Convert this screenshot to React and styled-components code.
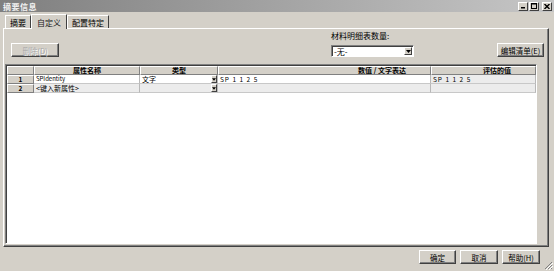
import React from 'react';
import styled, { createGlobalStyle } from 'styled-components';

const GlobalStyle = createGlobalStyle`
  html, body {
    margin: 0;
    padding: 0;
    background: #d4d0c8;
  }
  * { box-sizing: border-box; }
`;

const FONT = `"Noto Sans CJK SC", "DejaVu Sans", sans-serif`;

const Window = styled.div`
  width: 554px;
  height: 271px;
  background: #d4d0c8;
  display: flex;
  flex-direction: column;
  font-family: ${FONT};
  font-size: 8px;
  color: #000;
  overflow: hidden;
  position: relative;
`;

const TitleBar = styled.div`
  height: 13px;
  display: flex;
  align-items: center;
  justify-content: space-between;
  padding: 0 2px 0 3px;
  background: linear-gradient(to right, #7f7f7f 0%, #9c9c9c 40%, #c6c6c6 100%);
`;

const TitleText = styled.span`
  color: #f2f2f2;
  font-size: 8px;
  font-weight: bold;
  letter-spacing: 0.5px;
`;

const TitleButtons = styled.div`
  display: flex;
  gap: 1px;
`;

const TitleButton = styled.div`
  width: 10px;
  height: 9px;
  background: #d4d0c8;
  border: 1px solid;
  border-color: #fff #404040 #404040 #fff;
  display: flex;
  align-items: center;
  justify-content: center;
  margin-left: ${p => (p.$gap ? '2px' : '0')};
`;

const Body = styled.div`
  flex: 1;
  display: flex;
  flex-direction: column;
  padding: 1px 5px 0 3px;
`;

const TabRow = styled.div`
  display: flex;
  height: 15px;
  align-items: flex-end;
  padding-left: 2px;
`;

const Tab = styled.div`
  height: ${p => (p.$active ? '15px' : '13px')};
  padding: 0 ${p => (p.$active ? '5px' : '4px')};
  display: flex;
  align-items: center;
  background: #d4d0c8;
  border-top: 1px solid #fff;
  border-left: 1px solid #fff;
  border-right: 1px solid #404040;
  margin-bottom: ${p => (p.$active ? '-1px' : '0')};
  position: relative;
  z-index: ${p => (p.$active ? 2 : 1)};
  color: ${p => (p.$active ? '#222' : '#000')};
`;

const Panel = styled.div`
  height: 219px;
  border: 1px solid;
  border-color: #fff #404040 #404040 #fff;
  box-shadow: inset -1px -1px 0 #808080;
  display: flex;
  flex-direction: column;
  padding: 0 11px 2px 1px;
`;

const Toolbar = styled.div`
  height: 35px;
  display: flex;
  align-items: flex-start;
  padding-left: 6px;
`;

const Button = styled.div`
  height: 14px;
  width: ${p => p.$w}px;
  border: 1px solid;
  border-color: #fff #404040 #404040 #fff;
  box-shadow: inset -1px -1px 0 #808080;
  display: flex;
  align-items: center;
  justify-content: center;
  font-size: 7.5px;
  white-space: nowrap;
  color: ${p => (p.$disabled ? '#a8a8a8' : '#000')};
  text-shadow: ${p => (p.$disabled ? '1px 1px 0 #fff' : 'none')};
  background: #d4d0c8;
`;

const DeleteWrap = styled.div`
  margin-top: 14px;
`;

const QtyGroup = styled.div`
  margin-left: 272px;
  margin-top: 2px;
  display: flex;
  flex-direction: column;
  gap: 4px;
`;

const Label = styled.div`
  font-size: 8px;
  line-height: 10px;
`;

const Combo = styled.div`
  width: 83px;
  height: 12px;
  background: #fff;
  border: 1px solid;
  border-color: #808080 #fff #fff #808080;
  box-shadow: inset 1px 1px 0 #404040;
  display: flex;
  align-items: center;
  justify-content: space-between;
  padding: 0 1px 0 2px;
  font-size: 8px;
`;

const Arrow = styled.div`
  width: ${p => p.$w || 8}px;
  height: ${p => p.$h || 8}px;
  background: #d4d0c8;
  border: 1px solid;
  border-color: #fff #404040 #404040 #fff;
  display: flex;
  align-items: center;
  justify-content: center;
  flex-shrink: 0;
`;

const EditWrap = styled.div`
  margin-left: auto;
  margin-top: 14px;
  margin-right: -7px;
`;

const TableBox = styled.div`
  flex: 1;
  background: #fff;
  border: 1px solid;
  border-color: #808080 #fff #fff #808080;
  box-shadow: inset 1px 1px 0 #404040;
  padding: 1px;
`;

const Grid = styled.div`
  display: grid;
  grid-template-columns: 27px 106px 78px 213px 105px;
  grid-auto-rows: 9px;
`;

const HeadCell = styled.div`
  background: #d4d0c8;
  border-top: 1px solid #fff;
  border-left: 1px solid #fff;
  border-right: 1px solid #808080;
  border-bottom: 1px solid #808080;
  display: flex;
  align-items: center;
  justify-content: ${p => p.$align || 'center'};
  padding-right: ${p => (p.$align === 'flex-end' ? '24px' : '0')};
  font-size: 7px;
  font-weight: bold;
  line-height: 7px;
  overflow: hidden;
`;

const Cell = styled.div`
  background: ${p => p.$bg || '#fff'};
  border-right: 1px solid #b8b8b8;
  border-bottom: 1px solid #c8c8c8;
  display: flex;
  align-items: center;
  justify-content: space-between;
  padding-left: 2px;
  font-size: ${p => p.$size || 6.5}px;
  line-height: 8px;
  color: ${p => p.$color || '#000'};
  overflow: hidden;
  white-space: nowrap;
  letter-spacing: ${p => p.$spacing || 0}px;
`;

const RowNum = styled(HeadCell)`
  font-size: 6.5px;
`;

const Footer = styled.div`
  height: 24px;
  display: flex;
  justify-content: flex-end;
  align-items: flex-start;
  gap: 4px;
  padding: 3px 9px 0 0;
`;

const Grip = styled.svg`
  position: absolute;
  right: 1px;
  bottom: 1px;
`;

const ArrowGlyph = () => (
  <svg width="5" height="3" viewBox="0 0 5 3">
    <path d="M0 0 H5 L2.5 3 Z" fill="#000" />
  </svg>
);

const columns = ['属性名称', '类型', '数值 / 文字表达', '评估的值'];

export default function App() {
  return (
    <>
      <GlobalStyle />
      <Window>
        <TitleBar>
          <TitleText>摘要信息</TitleText>
          <TitleButtons>
            <TitleButton>
              <svg width="5" height="5" viewBox="0 0 5 5"><rect x="0" y="3" width="4" height="1.5" fill="#000" /></svg>
            </TitleButton>
            <TitleButton>
              <svg width="6" height="6" viewBox="0 0 6 6"><rect x="0.5" y="0.5" width="5" height="5" fill="none" stroke="#000" /><rect x="0" y="0" width="6" height="1.5" fill="#000" /></svg>
            </TitleButton>
            <TitleButton $gap>
              <svg width="6" height="5" viewBox="0 0 6 5"><path d="M0.5 0 L5.5 5 M5.5 0 L0.5 5" stroke="#000" strokeWidth="1.4" /></svg>
            </TitleButton>
          </TitleButtons>
        </TitleBar>
        <Body>
          <TabRow>
            <Tab>摘要</Tab>
            <Tab $active>自定义</Tab>
            <Tab>配置特定</Tab>
          </TabRow>
          <Panel>
            <Toolbar>
              <DeleteWrap>
                <Button $w={48} $disabled>删除(D)</Button>
              </DeleteWrap>
              <QtyGroup>
                <Label>材料明细表数量:</Label>
                <Combo>
                  <span>-无-</span>
                  <Arrow><ArrowGlyph /></Arrow>
                </Combo>
              </QtyGroup>
              <EditWrap>
                <Button $w={47}>编辑清单(E)</Button>
              </EditWrap>
            </Toolbar>
            <TableBox>
              <Grid>
                <HeadCell />
                {columns.map((c, i) => (
                  <HeadCell key={c} $align={i >= 2 ? 'flex-end' : 'center'}>{c}</HeadCell>
                ))}
                <RowNum>1</RowNum>
                <Cell $size={6}>SPIdentity</Cell>
                <Cell $size={7}>
                  <span>文字</span>
                  <Arrow $w={6} $h={8}><ArrowGlyph /></Arrow>
                </Cell>
                <Cell $spacing={1}>SP 1 1 2 5</Cell>
                <Cell $bg="#ececec" $spacing={1}>SP 1 1 2 5</Cell>
                <RowNum>2</RowNum>
                <Cell $bg="#ececec" $size={7}>&lt;键入新属性&gt;</Cell>
                <Cell $bg="#ececec">
                  <span />
                  <Arrow $w={6} $h={8}><ArrowGlyph /></Arrow>
                </Cell>
                <Cell $bg="#ececec" />
                <Cell $bg="#ececec" />
              </Grid>
            </TableBox>
          </Panel>
          <Footer>
            <Button $w={37}>确定</Button>
            <Button $w={38}>取消</Button>
            <Button $w={38}>帮助(H)</Button>
          </Footer>
        </Body>
        <Grip width="10" height="10" viewBox="0 0 10 10">
          <path d="M9 2 L2 9 M9 5 L5 9 M9 8 L8 9" stroke="#808080" strokeWidth="1" />
          <path d="M10 3 L3 10 M10 6 L6 10" stroke="#fff" strokeWidth="1" />
        </Grip>
      </Window>
    </>
  );
}
